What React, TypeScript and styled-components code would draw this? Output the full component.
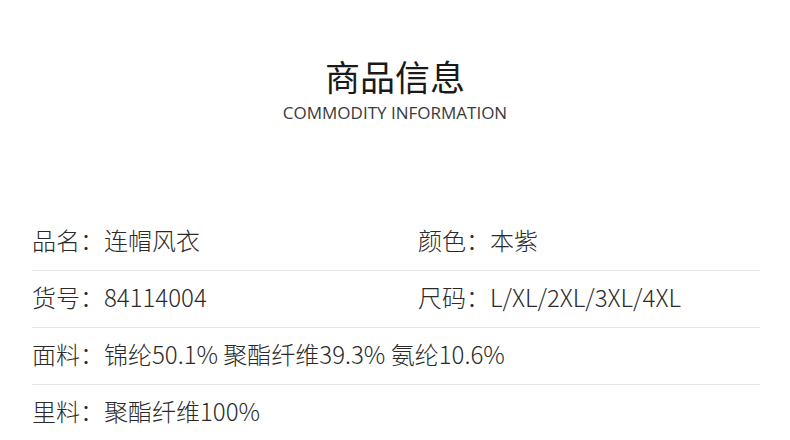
import React from "react";
import styled, { createGlobalStyle } from "styled-components";

const Global = createGlobalStyle`
  html, body { margin: 0; padding: 0; background: #ffffff; }
  body { font-family: "Noto Sans CJK SC", "Noto Sans", sans-serif; color: #222; }
`;

const Page = styled.div`
  width: 790px;
  height: 440px;
  overflow: hidden;
  background: #fff;
`;

const Header = styled.header`
  display: flex;
  flex-direction: column;
  align-items: center;
  padding-top: 54px;
  height: 158px;
  box-sizing: border-box;
`;

const Title = styled.h1`
  margin: 0;
  font-family: "Noto Sans CJK SC", sans-serif;
  font-size: 35px;
  line-height: 44px;
  font-weight: 400;
  color: #1a1a1a;
`;

const Subtitle = styled.div`
  margin-top: 4px;
  font-family: "Open Sans", "Noto Sans", sans-serif;
  font-size: 17px;
  line-height: 22px;
  font-weight: 400;
  color: #3a3a3a;
`;

const Table = styled.section`
  margin: 56px 30px 0 32px;
`;

const Row = styled.div<{ $last?: boolean }>`
  display: grid;
  grid-template-columns: 386px 1fr;
  height: 56px;
  align-items: center;
  border-bottom: ${(p) => (p.$last ? "none" : "1px solid #e6e6e6")};
`;

const Cell = styled.div`
  font-family: "Noto Sans CJK SC", sans-serif;
  font-size: 24px;
  font-weight: 300;
  color: #2a2a2a;
  white-space: nowrap;
  line-height: 1;
  padding-bottom: 5px;
`;

const rows: { left: string; right?: string }[] = [
  { left: "品名：连帽风衣", right: "颜色：本紫" },
  { left: "货号：84114004", right: "尺码：L/XL/2XL/3XL/4XL" },
  { left: "面料：锦纶50.1% 聚酯纤维39.3% 氨纶10.6%" },
  { left: "里料：聚酯纤维100%" },
];

export default function App() {
  return (
    <Page>
      <Global />
      <Header>
        <Title>商品信息</Title>
        <Subtitle>COMMODITY INFORMATION</Subtitle>
      </Header>
      <Table>
        {rows.map((r, i) => (
          <Row key={i} $last={i === rows.length - 1}>
            <Cell>{r.left}</Cell>
            {r.right ? <Cell>{r.right}</Cell> : null}
          </Row>
        ))}
      </Table>
    </Page>
  );
}
